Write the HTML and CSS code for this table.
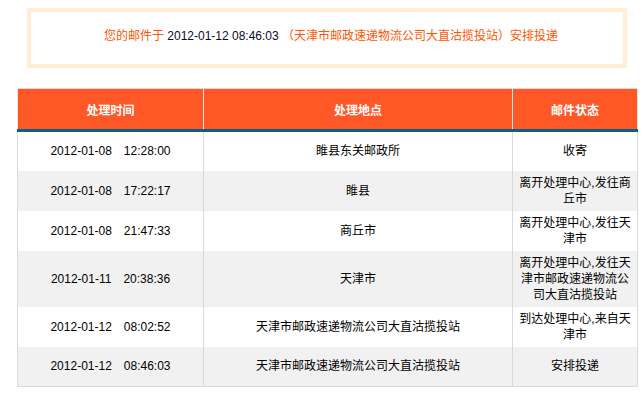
FILE: index.html
```html
<!DOCTYPE html>
<html lang="zh-CN">
<head>
<meta charset="utf-8">
<title>邮件跟踪</title>
<link rel="stylesheet" href="styles.css">
</head>
<body>
<div class="notice">
  <p class="notice-text">您的邮件于 <span class="notice-time">2012-01-12 08:46:03</span> （天津市邮政速递物流公司大直沽揽投站）安排投递</p>
</div>
<table class="track">
  <colgroup>
    <col class="c-time">
    <col class="c-place">
    <col class="c-status">
  </colgroup>
  <thead>
    <tr><th>处理时间</th><th>处理地点</th><th>邮件状态</th></tr>
  </thead>
  <tbody>
    <tr><td class="time">2012-01-08<span class="gap">12:28:00</span></td><td>睢县东关邮政所</td><td class="status">收寄</td></tr>
    <tr><td class="time">2012-01-08<span class="gap">17:22:17</span></td><td>睢县</td><td class="status">离开处理中心,发往商丘市</td></tr>
    <tr><td class="time">2012-01-08<span class="gap">21:47:33</span></td><td>商丘市</td><td class="status">离开处理中心,发往天津市</td></tr>
    <tr><td class="time">2012-01-11<span class="gap">20:38:36</span></td><td>天津市</td><td class="status">离开处理中心,发往天津市邮政速递物流公司大直沽揽投站</td></tr>
    <tr><td class="time">2012-01-12<span class="gap">08:02:52</span></td><td>天津市邮政速递物流公司大直沽揽投站</td><td class="status">到达处理中心,来自天津市</td></tr>
    <tr><td class="time">2012-01-12<span class="gap">08:46:03</span></td><td>天津市邮政速递物流公司大直沽揽投站</td><td class="status">安排投递</td></tr>
  </tbody>
</table>
</body>
</html>
```

FILE: styles.css
```css
html, body {
  background: #fff;
}
body {
  margin: 8px 0 0 17px;
  font-family: "Liberation Sans", "Noto Sans CJK SC", sans-serif;
  font-size: 12px;
  color: #000;
}
.notice {
  box-sizing: border-box;
  width: 600px;
  height: 60px;
  margin-left: 10px;
  border: 4px solid #ffeed4;
  display: flex;
  align-items: center;
  justify-content: center;
}
.notice-text {
  margin: 0 0 4px 8px;
  color: #ff5500;
  line-height: 16px;
}
.notice-time {
  color: #0a0a2a;
}
.track {
  margin-top: 20px;
  width: 620px;
  table-layout: fixed;
  border-collapse: collapse;
  border: 1px solid #dadada;
}
.c-time { width: 186px; }
.c-place { width: 309px; }
.c-status { width: 125px; }
.track th {
  height: 40px;
  padding: 0;
  background: #ff5726;
  color: #fff;
  font-weight: bold;
  border-left: 1px solid #e6e6e6;
  border-right: 1px solid #e6e6e6;
  border-bottom: 3px solid #0b5f8d;
  text-align: center;
}
.track td {
  height: 40px;
  box-sizing: border-box;
  padding: 4px 5px;
  line-height: 16px;
  text-align: center;
  vertical-align: middle;
  border-left: 1px solid #dadada;
  border-right: 1px solid #dadada;
}
.track tbody tr:nth-child(even) td {
  background: #f1f1f1;
}
.gap {
  margin-left: 12px;
}
```
